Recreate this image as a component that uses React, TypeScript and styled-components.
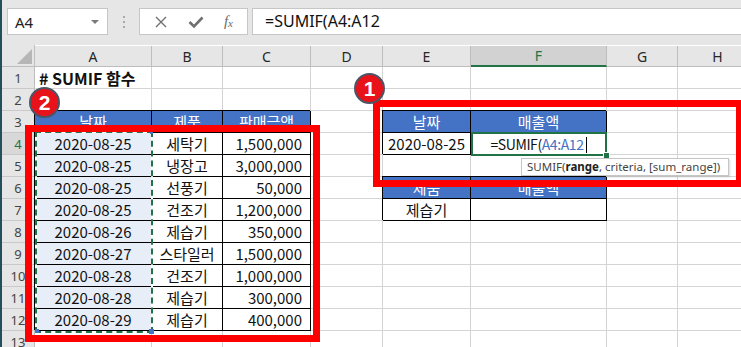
import React from "react";
import styled, { createGlobalStyle } from "styled-components";

const CELL_FONT = `"Noto Sans CJK KR", "Noto Sans", sans-serif`;
const UI_FONT = `"Noto Sans", "Open Sans", sans-serif`;
const GREEN = "#217346";
const BLUE = "#4472c4";
const GRID = "#d4d4d4";

const GlobalStyle = createGlobalStyle`
  html, body {
    margin: 0;
    padding: 0;
    background: #fff;
    overflow: hidden;
  }
`;

const Window = styled.div`
  position: relative;
  width: 741px;
  height: 347px;
  overflow: hidden;
  box-sizing: border-box;
  border-left: 2px solid #24505e;
  background: #e6e6e6;
`;

/* ---------- formula bar ---------- */

const FormulaBar = styled.div`
  display: flex;
  align-items: flex-start;
  height: 45px;
  box-sizing: border-box;
  padding: 8px 0 0 5px;
  font-family: ${UI_FONT};
`;

const NameBox = styled.div`
  display: flex;
  align-items: center;
  justify-content: space-between;
  width: 101px;
  height: 27px;
  box-sizing: border-box;
  padding: 0 8px 0 7px;
  background: #fff;
  border: 1px solid #c6c6c6;
  font-size: 15px;
  color: #222;
`;

const DropCaret = styled.span`
  width: 0;
  height: 0;
  border-left: 4px solid transparent;
  border-right: 4px solid transparent;
  border-top: 4px solid #7a7a7a;
`;

const Grip = styled.div`
  display: flex;
  flex-direction: column;
  align-items: center;
  justify-content: center;
  gap: 3px;
  width: 31px;
  height: 27px;
`;

const GripDot = styled.span`
  width: 2px;
  height: 2px;
  background: #a8a8a8;
`;

const FnButtons = styled.div`
  display: flex;
  align-items: center;
  justify-content: space-around;
  width: 109px;
  height: 27px;
  box-sizing: border-box;
  padding: 0 4px;
  background: #fff;
  border: 1px solid #c6c6c6;
  color: #707070;
`;

const FxLabel = styled.span`
  font-family: "Liberation Serif", serif;
  font-style: italic;
  font-size: 15px;
  color: #6a6a6a;
  sub {
    font-size: 11px;
    vertical-align: -1px;
  }
`;

const FormulaInput = styled.div`
  flex: 1;
  height: 27px;
  margin-left: 4px;
  box-sizing: border-box;
  padding-left: 12px;
  background: #fff;
  border: 1px solid #c6c6c6;
  border-right: none;
  font-size: 16px;
  line-height: 25px;
  color: #111;
`;

/* ---------- sheet ---------- */

const Sheet = styled.div`
  display: grid;
  grid-template-columns: 33px 117px 71px 88px 72px 88px 136px 71px 80px;
  grid-template-rows: repeat(14, 22px);
  background: #fff;
  font-family: ${CELL_FONT};
`;

const Corner = styled.div`
  grid-row: 1;
  grid-column: 1;
  position: relative;
  background: #e6e6e6;
  border-right: 1px solid #bdbdbd;
  border-bottom: 1px solid #bdbdbd;
  &::after {
    content: "";
    position: absolute;
    right: 2px;
    bottom: 2px;
    border-left: 15px solid transparent;
    border-bottom: 15px solid #b6b6b6;
  }
`;

const ColHead = styled.div<{ $c: number; $active?: boolean }>`
  grid-row: 1;
  grid-column: ${({ $c }) => $c};
  display: flex;
  align-items: center;
  justify-content: center;
  box-sizing: border-box;
  margin-top: 1px;
  background: ${({ $active }) => ($active ? "#d2d2d2" : "#e6e6e6")};
  border-right: 1px solid #bdbdbd;
  border-bottom: ${({ $active }) => ($active ? `2px solid ${GREEN}` : "1px solid #bdbdbd")};
  font-family: ${UI_FONT};
  font-size: 14px;
  color: ${({ $active }) => ($active ? GREEN : "#262626")};
`;

const RowHead = styled.div<{ $r: number; $active?: boolean }>`
  grid-row: ${({ $r }) => $r};
  grid-column: 1;
  display: flex;
  align-items: center;
  justify-content: center;
  box-sizing: border-box;
  background: ${({ $active }) => ($active ? "#d8d8d8" : "#e6e6e6")};
  border-right: 1px solid #bdbdbd;
  border-bottom: 1px solid #c9c9c9;
  font-family: ${UI_FONT};
  font-size: 13px;
  color: ${({ $active }) => ($active ? GREEN : "#444")};
`;

type Variant = "plain" | "head" | "data" | "ref";

const Cell = styled.div<{
  $r: number;
  $c: number;
  $variant: Variant;
  $align: "left" | "center" | "right";
  $bold?: boolean;
}>`
  grid-row: ${({ $r }) => $r};
  grid-column: ${({ $c }) => $c};
  display: flex;
  align-items: center;
  justify-content: ${({ $align }) =>
    $align === "left" ? "flex-start" : $align === "right" ? "flex-end" : "center"};
  box-sizing: border-box;
  padding: 0 ${({ $align }) => ($align === "right" ? "8px" : "4px")};
  white-space: nowrap;
  overflow: visible;
  font-size: ${({ $bold }) => ($bold ? "16px" : "15px")};
  font-weight: ${({ $bold }) => ($bold ? 700 : 400)};
  color: ${({ $variant }) => ($variant === "head" ? "#fff" : "#111")};
  background: ${({ $variant }) =>
    $variant === "head" ? BLUE : $variant === "ref" ? "#e8eef8" : "transparent"};
  border-right: 1px solid ${({ $variant }) => ($variant === "plain" ? GRID : "#000")};
  border-bottom: 1px solid ${({ $variant }) => ($variant === "plain" ? GRID : "#000")};
  box-shadow: ${({ $variant }) => ($variant === "plain" ? "none" : "-1px -1px 0 0 #000")};
`;

const EditText = styled.span`
  font-size: 14px;
  letter-spacing: -0.4px;
`;

const RefText = styled.span`
  color: ${BLUE};
`;

const TextCaret = styled.span`
  display: inline-block;
  width: 1px;
  height: 16px;
  margin-left: 2px;
  background: #000;
  vertical-align: -3px;
`;

const RefFrame = styled.div`
  grid-row: 5 / 14;
  grid-column: 2;
  position: relative;
  z-index: 2;
  margin: -2px -1px -2px 0;
  border: 2px solid #fff;
  &::after {
    content: "";
    position: absolute;
    inset: -2px;
    border: 2px dashed ${GREEN};
  }
`;

const Handle = styled.span<{ $size: number; $x: "left" | "right"; $y: "top" | "bottom" }>`
  position: absolute;
  z-index: 3;
  width: ${({ $size }) => $size}px;
  height: ${({ $size }) => $size}px;
  background: ${BLUE};
  ${({ $x, $size }) => `${$x}: ${-Math.round($size / 2)}px;`}
  ${({ $y, $size }) => `${$y}: ${-Math.round($size / 2)}px;`}
`;

const ActiveFrame = styled.div`
  grid-row: 5;
  grid-column: 7;
  position: relative;
  z-index: 2;
  margin: -1px 0 -1px 0;
  border: 2px solid ${GREEN};
`;

const FillHandle = styled.span`
  position: absolute;
  right: -5px;
  bottom: -5px;
  width: 5px;
  height: 5px;
  background: ${GREEN};
  border: 1px solid #fff;
`;

/* ---------- annotations ---------- */

const RedBox = styled.div<{ $left: number; $top: number; $w: number; $h: number }>`
  position: absolute;
  z-index: 5;
  left: ${({ $left }) => $left}px;
  top: ${({ $top }) => $top}px;
  width: ${({ $w }) => $w}px;
  height: ${({ $h }) => $h}px;
  box-sizing: border-box;
  border: 7px solid #ff0000;
  pointer-events: none;
`;

const Badge = styled.div<{ $left: number; $top: number }>`
  position: absolute;
  z-index: 6;
  left: ${({ $left }) => $left}px;
  top: ${({ $top }) => $top}px;
  width: 31px;
  height: 31px;
  box-sizing: border-box;
  display: flex;
  align-items: center;
  justify-content: center;
  border-radius: 50%;
  background: #e8131a;
  border: 2px solid #4b5566;
  color: #fff;
  font-family: "Liberation Sans", Arial, sans-serif;
  font-weight: 700;
  font-size: 21px;
`;

const Tooltip = styled.div`
  position: absolute;
  z-index: 4;
  left: 519px;
  top: 158px;
  width: 208px;
  height: 18px;
  box-sizing: border-box;
  padding: 0 5px;
  background: #fff;
  border: 1px solid #c6c6c6;
  box-shadow: 1px 1px 2px rgba(0, 0, 0, 0.15);
  font-family: ${UI_FONT};
  font-size: 11.5px;
  line-height: 16px;
  color: #444;
  white-space: nowrap;
  b {
    color: #222;
  }
`;

/* ---------- data ---------- */

const COLS = ["A", "B", "C", "D", "E", "F", "G", "H"];

const sales = [
  ["2020-08-25", "세탁기", "1,500,000"],
  ["2020-08-25", "냉장고", "3,000,000"],
  ["2020-08-25", "선풍기", "50,000"],
  ["2020-08-25", "건조기", "1,200,000"],
  ["2020-08-26", "제습기", "350,000"],
  ["2020-08-27", "스타일러", "1,500,000"],
  ["2020-08-28", "건조기", "1,000,000"],
  ["2020-08-28", "제습기", "300,000"],
  ["2020-08-29", "제습기", "400,000"],
];

type Spec = {
  text?: React.ReactNode;
  variant: Variant;
  align: "left" | "center" | "right";
  bold?: boolean;
};

// row: sheet row (1-based), col: 0 = A
function specFor(row: number, col: number): Spec {
  if (row === 1 && col === 0) return { text: "# SUMIF 함수", variant: "plain", align: "left", bold: true };
  if (row === 3 && col <= 2) {
    return { text: ["날짜", "제품", "판매금액"][col], variant: "head", align: "center" };
  }
  if (row >= 4 && row <= 12 && col <= 2) {
    const rec = sales[row - 4];
    if (col === 0) return { text: rec[0], variant: "ref", align: "center" };
    return { text: rec[col], variant: "data", align: col === 2 ? "right" : "center" };
  }
  if ((row === 3 || row === 6) && (col === 4 || col === 5)) {
    const text = col === 4 ? (row === 3 ? "날짜" : "제품") : "매출액";
    return { text, variant: "head", align: "center" };
  }
  if (row === 4 && col === 4) return { text: "2020-08-25", variant: "data", align: "center" };
  if (row === 4 && col === 5) {
    return {
      text: (
        <EditText>
          =SUMIF(<RefText>A4:A12</RefText>
          <TextCaret />
        </EditText>
      ),
      variant: "data",
      align: "center",
    };
  }
  if (row === 7 && col === 4) return { text: "제습기", variant: "data", align: "center" };
  if (row === 7 && col === 5) return { variant: "data", align: "center" };
  return { variant: "plain", align: "left" };
}

const ROWS = Array.from({ length: 13 }, (_, i) => i + 1);

const App = () => {
  return (
    <Window>
      <GlobalStyle />
      <FormulaBar>
        <NameBox>
          <span>A4</span>
          <DropCaret />
        </NameBox>
        <Grip>
          <GripDot />
          <GripDot />
          <GripDot />
        </Grip>
        <FnButtons>
          <svg width="14" height="14" viewBox="0 0 14 14" fill="none" stroke="#707070" strokeWidth="1.4">
            <path d="M2 2 L12 12 M12 2 L2 12" />
          </svg>
          <svg width="16" height="14" viewBox="0 0 16 14" fill="none" stroke="#707070" strokeWidth="2.6" strokeLinejoin="miter">
            <path d="M1.5 7 L6 11.5 L14.5 2.5" />
          </svg>
          <FxLabel>
            f<sub>x</sub>
          </FxLabel>
        </FnButtons>
        <FormulaInput>=SUMIF(A4:A12</FormulaInput>
      </FormulaBar>

      <Sheet>
        <Corner />
        {COLS.map((c, i) => (
          <ColHead key={c} $c={i + 2} $active={c === "F"}>
            {c}
          </ColHead>
        ))}
        {ROWS.map((r) => (
          <React.Fragment key={r}>
            <RowHead $r={r + 1} $active={r === 4}>
              {r}
            </RowHead>
            {COLS.map((_, ci) => {
              const s = specFor(r, ci);
              return (
                <Cell key={ci} $r={r + 1} $c={ci + 2} $variant={s.variant} $align={s.align} $bold={s.bold}>
                  {s.text}
                </Cell>
              );
            })}
          </React.Fragment>
        ))}
        <RefFrame>
          <Handle $size={3} $x="right" $y="top" />
          <Handle $size={4} $x="left" $y="bottom" />
          <Handle $size={5} $x="right" $y="bottom" />
        </RefFrame>
        <ActiveFrame>
          <FillHandle />
        </ActiveFrame>
      </Sheet>

      <Tooltip>
        SUMIF(<b>range</b>, criteria, [sum_range])
      </Tooltip>

      <RedBox $left={23} $top={125} $w={295} $h={217} />
      <RedBox $left={371} $top={100} $w={370} $h={87} />
      <Badge $left={27} $top={87}>2</Badge>
      <Badge $left={352} $top={73}>1</Badge>
    </Window>
  );
};

export default App;
